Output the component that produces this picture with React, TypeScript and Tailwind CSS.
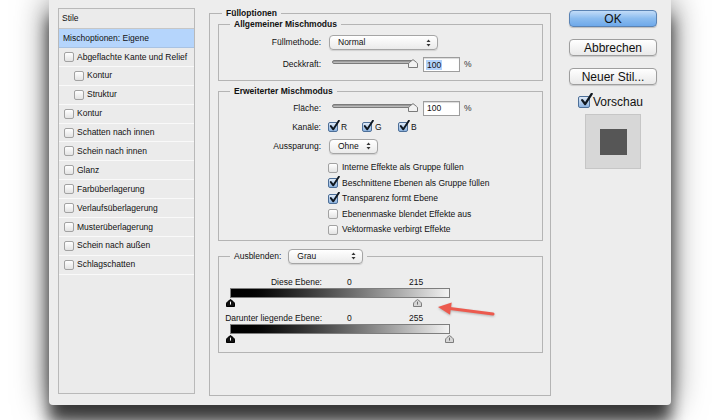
import React from "react";

type Kids = { children?: React.ReactNode };

// small mac-style checkbox, checked ones get the heavy tick that pokes out the top
function Box({ on = false, big = false }: { on?: boolean; big?: boolean }) {
  return (
    <span
      className={`relative inline-block shrink-0 rounded-[2px] border ${big ? "w-[12px] h-[12px]" : "w-[10px] h-[10px]"} ${
        on
          ? "border-[#4d6f98] bg-gradient-to-b from-[#dfeaf7] to-[#8db3df]"
          : "border-[#a2a2a2] bg-gradient-to-b from-white to-[#e3e3e3]"
      }`}
    >
      {on && (
        <svg
          viewBox="0 0 12 12"
          className={`absolute ${big ? "left-[1px] -top-[4px] w-[13px] h-[13px]" : "left-[0px] -top-[3px] w-[11px] h-[11px]"}`}
        >
          <path d="M2 6.6 L4.7 10.2 L10.8 0.8" stroke="#101820" strokeWidth="2.1" fill="none" strokeLinecap="round" strokeLinejoin="round" />
        </svg>
      )}
    </span>
  );
}

function UpDown() {
  return (
    <svg width="5" height="8" viewBox="0 0 5 8">
      <path d="M2.5 0.5 L4.5 3 L0.5 3 Z" fill="#333" />
      <path d="M2.5 7.5 L4.5 5 L0.5 5 Z" fill="#333" />
    </svg>
  );
}

function Select({ value, w }: { value: string; w: string }) {
  return (
    <div
      className={`${w} h-[15px] flex items-center justify-between pl-[8px] pr-[6px] rounded-[4px] border border-[#a5a5a5] bg-gradient-to-b from-white to-[#ebebeb] shadow-[0_1px_1px_rgba(0,0,0,0.12)]`}
    >
      <span>{value}</span>
      <UpDown />
    </div>
  );
}

function Slider() {
  return (
    <div className="relative w-[86px] h-[15px] ml-[3px]">
      <div className="absolute left-0 right-[3px] top-[3px] h-[4px] rounded-full border border-[#7b7b7b] bg-gradient-to-b from-[#8d8d8d] to-[#c9c9c9]" />
      <svg className="absolute right-0 top-[2px]" width="10" height="9" viewBox="0 0 10 9">
        <path d="M0.5 8.5 L0.5 5 Q0.5 4 1.5 3.4 L5 0.6 L8.5 3.4 Q9.5 4 9.5 5 L9.5 8.5 Z" fill="#f2f2f2" stroke="#7a7a7a" />
      </svg>
    </div>
  );
}

function NumBox({ selected = false }: { selected?: boolean }) {
  return (
    <div className="flex items-center ml-[5px]">
      <div className="w-[37px] h-[15px] flex items-center pl-[2px] border border-[#9d9d9d] bg-white shadow-[inset_0_1px_1px_rgba(0,0,0,0.15)]">
        <span className={selected ? "bg-[#b3d3fb] px-[1px] leading-[10px]" : "px-[1px]"}>100</span>
      </div>
      <span className="ml-[4px] text-[#333]">%</span>
    </div>
  );
}

function Group({ title, className, children }: Kids & { title: React.ReactNode; className: string }) {
  return (
    <fieldset className={`border border-[#b4b4b4] ${className}`}>
      <legend className="ml-[11px] px-[4px] leading-[10px] font-bold">{title}</legend>
      {children}
    </fieldset>
  );
}

function Row({ label, className = "", children }: Kids & { label: string; className?: string }) {
  return (
    <div className={`flex items-center ${className}`}>
      <span className="w-[102px] text-right shrink-0">{label}</span>
      <div className="ml-[8px] flex items-center">{children}</div>
    </div>
  );
}

function Thumb({ dark, left }: { dark: boolean; left: number }) {
  return (
    <svg className="absolute top-0" style={{ left }} width="9" height="8" viewBox="0 0 9 8">
      <path
        d="M0.5 7.5 L0.5 5 Q0.5 3.6 1.8 2.6 L4.5 0.5 L7.2 2.6 Q8.5 3.6 8.5 5 L8.5 7.5 Z"
        fill={dark ? "#111" : "#d6d6d6"}
        stroke={dark ? "#000" : "#7d7d7d"}
      />
      <rect x="4" y="2.6" width="1" height="3" fill={dark ? "#fff" : "#6c6c6c"} />
    </svg>
  );
}

function BlendBar({ hi }: { hi: number }) {
  return (
    <>
      <div className="ml-[11px] mt-[1px] w-[220px] h-[10px] border border-[#7e7e7e] bg-gradient-to-r from-black to-[#f3f3f3]" />
      <div className="relative ml-[11px] mt-[1px] w-[230px] h-[8px]">
        <Thumb dark left={-4} />
        <Thumb dark={false} left={hi} />
      </div>
    </>
  );
}

const styles = [
  { name: "Abgeflachte Kante und Relief", sub: false },
  { name: "Kontur", sub: true },
  { name: "Struktur", sub: true },
  { name: "Kontur", sub: false },
  { name: "Schatten nach innen", sub: false },
  { name: "Schein nach innen", sub: false },
  { name: "Glanz", sub: false },
  { name: "Farbüberlagerung", sub: false },
  { name: "Verlaufsüberlagerung", sub: false },
  { name: "Musterüberlagerung", sub: false },
  { name: "Schein nach außen", sub: false },
  { name: "Schlagschatten", sub: false },
];

const knockout = [
  { text: "Interne Effekte als Gruppe füllen", on: false },
  { text: "Beschnittene Ebenen als Gruppe füllen", on: true },
  { text: "Transparenz formt Ebene", on: true },
  { text: "Ebenenmaske blendet Effekte aus", on: false },
  { text: "Vektormaske verbirgt Effekte", on: false },
];

export default function App() {
  return (
    <div className="relative w-[720px] h-[420px] overflow-hidden bg-white font-['Liberation_Sans',Arial,sans-serif] text-[8.5px] text-[#111]">
      {/* the layer style sheet */}
      <div className="ml-[49px] w-[622px] h-[405px] rounded-b-[4px] bg-[#ededed] shadow-[0_0_34px_rgba(0,0,0,0.55),0_18px_16px_rgba(0,0,0,0.7)] flex items-start pl-[9px] pt-[8px]">
        {/* style list */}
        <div className="w-[137px] h-[386px] border border-[#b9b9b9] bg-[#ebebeb]">
          <div className="h-[20px] flex items-center pl-[3px] border-b border-[#c6c6c6]">Stile</div>
          <div className="h-[19px] flex items-center pl-[4px] bg-[#b5d5fc] border-b border-[#a9c3e3]">Mischoptionen: Eigene</div>
          {styles.map((s, i) => (
            <div
              key={i}
              className={`h-[18.9px] flex items-center gap-[3px] border-b border-[#f9f9f9] ${s.sub ? "pl-[15px]" : "pl-[5px]"}`}
            >
              <Box />
              <span>{s.name}</span>
            </div>
          ))}
        </div>

        {/* blending options */}
        <fieldset className="ml-[14px] w-[342px] h-[388px] border border-[#b4b4b4]">
          <legend className="ml-[12px] px-[4px] leading-[10px] font-bold">Fülloptionen</legend>

          <Group title="Allgemeiner Mischmodus" className="ml-[8px] mt-[1px] w-[325px] h-[62px]">
            <Row label="Füllmethode:" className="mt-[6px] h-[15px]">
              <Select value="Normal" w="w-[109px]" />
            </Row>
            <Row label="Deckkraft:" className="mt-[7px] h-[15px]">
              <Slider />
              <NumBox selected />
            </Row>
          </Group>

          <Group title="Erweiterter Mischmodus" className="ml-[8px] mt-[5px] w-[325px] h-[155px]">
            <Row label="Fläche:" className="mt-[5px] h-[15px]">
              <Slider />
              <NumBox />
            </Row>
            <Row label="Kanäle:" className="mt-[5px] h-[12px]">
              <div className="-ml-[1px] flex items-center">
                <span className="w-[34px] flex items-center gap-[3px]"><Box on /><span>R</span></span>
                <span className="w-[36px] flex items-center gap-[3px]"><Box on /><span>G</span></span>
                <span className="flex items-center gap-[3px]"><Box on /><span>B</span></span>
              </div>
            </Row>
            <Row label="Aussparung:" className="mt-[5px] h-[16px]">
              <Select value="Ohne" w="w-[49px]" />
            </Row>
            <div className="mt-[6px] ml-[109px]">
              {knockout.map((k) => (
                <div key={k.text} className="h-[15.5px] flex items-center gap-[4px]">
                  <Box on={k.on} />
                  <span>{k.text}</span>
                </div>
              ))}
            </div>
          </Group>

          <Group
            className="ml-[8px] mt-[7px] w-[325px] h-[105px]"
            title={
              <span className="flex items-center h-[16px] font-normal">
                <span>Ausblenden:</span>
                <span className="ml-[7px]">
                  <Select value="Grau" w="w-[75px]" />
                </span>
              </span>
            }
          >
            <div className="mt-[13px] h-[10px] flex items-center">
              <span className="w-[103px] text-right">Diese Ebene:</span>
              <span className="ml-[25px] w-[62px]">0</span>
              <span>215</span>
            </div>
            <BlendBar hi={183} />
            <div className="mt-[6px] h-[10px] flex items-center">
              <span className="w-[103px] text-right">Darunter liegende Ebene:</span>
              <span className="ml-[25px] w-[62px]">0</span>
              <span>255</span>
            </div>
            <div className="mt-[1px]">
              <BlendBar hi={215} />
            </div>
          </Group>
        </fieldset>

        {/* buttons and preview */}
        <div className="ml-[18px] mt-[2px] w-[88px] flex flex-col text-[12px] text-[#111]">
          <button className="h-[17px] rounded-[4px] border border-[#5a83b4] bg-gradient-to-b from-[#c2dcf8] via-[#8bbcef] to-[#6ea9ea] shadow-[0_1px_1px_rgba(0,0,0,0.2)] leading-none">
            OK
          </button>
          <button className="mt-[12px] h-[17px] rounded-[4px] border border-[#9e9e9e] bg-gradient-to-b from-white to-[#e9e9e9] shadow-[0_1px_1px_rgba(0,0,0,0.15)] leading-none">
            Abbrechen
          </button>
          <button className="mt-[12px] h-[17px] rounded-[4px] border border-[#9e9e9e] bg-gradient-to-b from-white to-[#e9e9e9] shadow-[0_1px_1px_rgba(0,0,0,0.15)] leading-none">
            Neuer Stil...
          </button>
          <div className="mt-[10px] pl-[9px] h-[13px] flex items-center gap-[3px]">
            <Box on big />
            <span>Vorschau</span>
          </div>
          <div className="mt-[6px] self-center w-[56px] h-[55px] border border-[#c6c6c6] bg-[#d7d7d7] flex items-center justify-center">
            <div className="w-[27px] h-[26px] bg-[#565656]" />
          </div>
        </div>
      </div>

      {/* red annotation arrow */}
      <svg className="absolute left-[430px] top-[296px] drop-shadow-[0_1px_1px_rgba(0,0,0,0.25)]" width="70" height="26" viewBox="0 0 70 26">
        <path d="M63 18 L20 12.6" stroke="#ec5a4e" strokeWidth="3" strokeLinecap="round" />
        <path d="M8 11 L21.7 6.5 L20.1 18.8 Z" fill="#ec5a4e" />
      </svg>
    </div>
  );
}
